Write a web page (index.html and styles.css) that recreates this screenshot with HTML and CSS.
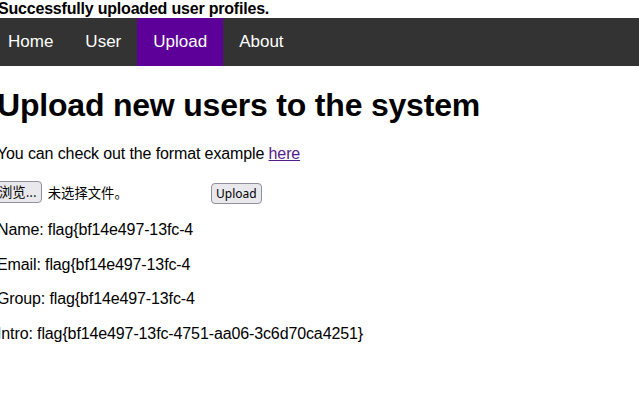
FILE: index.html
```html
<html>
  <head>
    <meta charset="utf-8">
    <link rel="stylesheet" href="styles.css">
  </head>
  <body>
    <b class="notice">Successfully uploaded user profiles.</b>
    <ul class="nav">
      <li><a href="#">Home</a></li>
      <li><a href="#">User</a></li>
      <li><a class="active" href="#">Upload</a></li>
      <li><a href="#">About</a></li>
    </ul>
    <div class="content">
      <h1>Upload new users to the system</h1>
      <p>You can check out the format example <a class="sample" href="#">here</a></p>
      <form class="upload">
        <span class="file">
          <button type="button" class="btn browse">浏览...</button>
          <span class="file-name">未选择文件。</span>
        </span>
        <button type="button" class="btn submit">Upload</button>
      </form>
      <p>Name: flag{bf14e497-13fc-4</p>
      <p>Email: flag{bf14e497-13fc-4</p>
      <p>Group: flag{bf14e497-13fc-4</p>
      <p>Intro: flag{bf14e497-13fc-4751-aa06-3c6d70ca4251}</p>
    </div>
  </body>
</html>
```

FILE: styles.css
```css
body {
  margin: 0;
  font-family: "Liberation Sans", Arial, sans-serif;
  font-size: 16px;
  color: #000;
  background: #fff;
}

.notice {
  display: block;
  margin-left: -2px;
  line-height: 18px;
  letter-spacing: -0.2px;
}

.nav {
  display: flex;
  list-style: none;
  margin: 0 0 0 -8px;
  padding: 0;
  background: #333;
}

.nav a {
  display: block;
  padding: 14px 16px;
  font-size: 17px;
  line-height: 20px;
  color: #fff;
  text-decoration: none;
}

.nav a.active {
  background: #5c0099;
}

.content {
  margin-left: -3px;
  letter-spacing: -0.12px;
}

h1 {
  font-size: 32px;
  margin: 21px 0 21px;
  line-height: 37px;
  letter-spacing: -0.2px;
}

p {
  margin: 16px 0;
  line-height: 18.4px;
}

.sample {
  color: #551a8b;
}

.upload {
  display: flex;
  align-items: flex-start;
  padding: 2px 0 1px;
  letter-spacing: 0;
}

.file {
  display: flex;
  align-items: center;
  width: 214px;
}

.btn {
  font-size: 13.33px;
  line-height: 16px;
  height: 22px;
  color: #000;
  background: #e9e9ed;
  border: 1px solid #8f8f9d;
  border-radius: 4px;
  padding: 2px 4px;
}

.browse {
  margin-left: -3px;
  font-family: "Noto Sans CJK SC", "Noto Sans", sans-serif;
}

.file-name {
  margin-left: 6px;
  font-size: 13.33px;
  font-family: "Noto Sans CJK SC", sans-serif;
}

.submit {
  margin-top: 2px;
  height: 21px;
  padding: 1px 4px;
  font-family: "Noto Sans", sans-serif;
  font-size: 12px;
}
```
